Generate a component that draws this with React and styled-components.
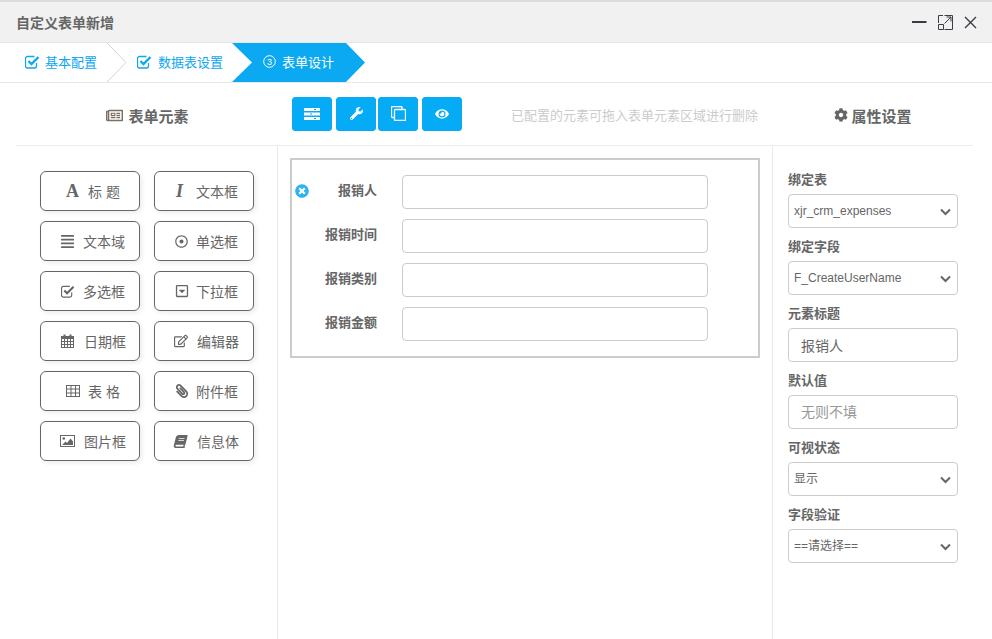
import React from "react";
import styled, { createGlobalStyle } from "styled-components";
import {
  FaAlignJustify, FaRegDotCircle, FaRegCaretSquareDown,
  FaRegEdit, FaPaperclip, FaBook, FaWrench, FaEye,
  FaCog, FaRegNewspaper, FaTimesCircle,
} from "react-icons/fa";

const Global = createGlobalStyle`
  html, body { margin: 0; padding: 0; background: #fff; overflow: hidden; }
  * { box-sizing: border-box; }
  body { font-family: "Liberation Sans", "Noto Sans CJK SC", sans-serif; color: #666; }
`;

const Page = styled.div`
  width: 992px;
  height: 639px;
  display: flex;
  flex-direction: column;
  border-top: 2px solid #dcdcdf;
`;

const TitleBar = styled.header`
  height: 41px;
  flex: none;
  background: #f1f1f1;
  border-bottom: 1px solid #e6e6e6;
  display: flex;
  align-items: center;
  justify-content: space-between;
  padding: 0 15px 0 16px;
`;
const Title = styled.h1`
  margin: 0;
  font-size: 14px;
  font-weight: bold;
  color: #666;
`;
const WinControls = styled.div`
  display: flex;
  align-items: center;
  gap: 11px;
  color: #3c3c46;
  svg { display: block; }
`;

const Steps = styled.nav`
  height: 40px;
  flex: none;
  display: flex;
  border-bottom: 1px solid #e8e8e8;
`;
const Step = styled.div`
  position: relative;
  width: ${(p) => p.$w}px;
  display: flex;
  align-items: center;
  gap: ${(p) => p.$gap}px;
  padding: 0 0 2px ${(p) => p.$pad}px;
  font-size: 13px;
  color: ${(p) => (p.$active ? "#fff" : "#0aa7f2")};
  background: ${(p) => (p.$active ? "#0aa9f2" : "transparent")};
  clip-path: ${(p) =>
    p.$active ? "polygon(0 0, 114px 0, 133px 50%, 114px 100%, 0 100%, 20px 50%)" : "none"};
`;
const Chevron = styled.svg`
  position: absolute;
  top: 0;
  right: 0;
`;
const StepNum = styled.svg`
  flex: none;
`;

const Toolbar = styled.div`
  height: 63px;
  flex: none;
  margin: 0 19px 0 16px;
  border-bottom: 1px solid #ececec;
  display: flex;
  align-items: center;
  padding-bottom: 1px;
`;
const PanelTitle = styled.div`
  width: ${(p) => p.$w}px;
  flex: none;
  display: flex;
  align-items: center;
  justify-content: center;
  gap: ${(p) => p.$gap}px;
  padding: 3px 0 0 ${(p) => p.$left || 0}px;
  font-size: 15px;
  font-weight: bold;
  color: #666;
`;
const Actions = styled.div`
  display: flex;
  gap: 4px;
  margin-left: 15px;
  button:nth-child(3) { margin-left: -2px; }
`;
const ActionBtn = styled.button`
  width: 40px;
  height: 34px;
  padding: 0;
  border: 1px solid #0aa9f2;
  border-radius: 3px;
  background: #05abf5;
  color: #fff;
  display: flex;
  align-items: center;
  justify-content: center;
`;
const Hint = styled.div`
  margin-left: 49px;
  padding-top: 2px;
  width: 277px;
  flex: none;
  font-size: 13px;
  color: #ccc;
  white-space: nowrap;
`;

const Body = styled.main`
  flex: 1;
  min-height: 0;
  display: grid;
  grid-template-columns: 278px 495px 1fr;
`;
const Palette = styled.aside`
  border-right: 1px solid #e9e9e9;
  padding: 25px 0 0 40px;
  display: grid;
  grid-template-columns: 100px 100px;
  grid-auto-rows: 40px;
  column-gap: 14px;
  row-gap: 10px;
  align-content: start;
`;
const ElementBtn = styled.div`
  border: 1px solid #666;
  border-radius: 6px;
  background: #fff;
  box-shadow: 2px 2px 5px rgba(0, 0, 0, 0.08);
  display: flex;
  align-items: center;
  padding-left: ${(p) => p.$left}px;
  gap: ${(p) => p.$gap}px;
  font-size: 14px;
  color: #666;
  white-space: pre;
  svg { flex: none; }
`;
const GlyphIcon = styled.span`
  font-family: "Liberation Serif", serif;
  font-weight: bold;
  font-style: ${(p) => (p.$italic ? "italic" : "normal")};
  font-size: 18px;
  line-height: 1;
  width: ${(p) => p.$w}px;
  flex: none;
  color: #666;
`;
const MirroredClip = styled(FaPaperclip)`
  transform: scaleX(-1);
`;
const SlantedBook = styled(FaBook)`
  transform: skewX(-14deg);
`;

const Canvas = styled.section`
  padding: 12px 12px 0 12px;
`;
const FormBox = styled.div`
  position: relative;
  width: 470px;
  height: 200px;
  border: 2px solid #ccc;
  padding: 15px 0 0 0;
  display: flex;
  flex-direction: column;
  gap: 10px;
`;
const RemoveBadge = styled.span`
  position: absolute;
  left: 3px;
  top: 24px;
  color: #2eb2f2;
  display: flex;
  background: radial-gradient(circle, #fff 45%, transparent 50%);
`;
const FormRow = styled.div`
  display: flex;
  align-items: center;
  height: 34px;
`;
const RowLabel = styled.label`
  width: 85px;
  margin-right: 25px;
  padding-bottom: 5px;
  text-align: right;
  font-size: 13px;
  font-weight: bold;
  color: #666;
`;
const RowInput = styled.input`
  width: 306px;
  height: 34px;
  border: 1px solid #ccc;
  border-radius: 4px;
  background: #fff;
  outline: none;
`;

const Props = styled.aside`
  border-left: 1px solid #e9e9e9;
  margin-left: -1px;
  padding: 25px 0 0 15px;
  display: flex;
  flex-direction: column;
`;
const Field = styled.div`
  width: 170px;
  height: 67px;
  display: flex;
  flex-direction: column;
`;
const FieldLabel = styled.label`
  height: 23px;
  line-height: 17px;
  font-size: 13px;
  font-weight: bold;
  color: #666;
`;
const SelectWrap = styled.div`
  position: relative;
  height: 34px;
`;
const Select = styled.select`
  width: 100%;
  height: 34px;
  appearance: none;
  border: 1px solid #ccc;
  border-radius: 4px;
  background: #fff;
  padding: 0 0 0 5px;
  font: 12px "Liberation Sans", "Noto Sans CJK SC", sans-serif;
  color: #666;
  outline: none;
`;
const Caret = styled.svg`
  position: absolute;
  right: 7px;
  top: 14px;
  pointer-events: none;
`;
const TextInput = styled.input`
  width: 100%;
  height: 34px;
  border: 1px solid #ccc;
  border-radius: 4px;
  background: #fff;
  padding: 0 12px;
  font: 14px "Liberation Sans", "Noto Sans CJK SC", sans-serif;
  color: #666;
  outline: none;
  &::placeholder { color: #999; opacity: 1; }
`;

const CheckSquare = ({ size = 14, color = "currentColor" }) => (
  <svg width={size + 1} height={size} viewBox="0 0 15 14" fill="none" stroke={color}>
    <path d="M11.5 8v3a2 2 0 0 1-2 2H2.5a2 2 0 0 1-2-2V3.500a2 2 0 0 1 2-2H9.500" strokeWidth="1.300" />
    <path d="M3.500 6l3 3L13.500 2" strokeWidth="2.300" />
  </svg>
);

const CalendarIcon = () => (
  <svg width="13" height="14" viewBox="0 0 13 14">
    <rect x="0.500" y="2.500" width="12" height="11" fill="none" stroke="currentColor" />
    <rect x="0.500" y="2.500" width="12" height="2.500" fill="currentColor" />
    <path d="M.5 7.500H12.500M.5 10.500H12.500M3.500 5V13.500M6.500 5V13.500M9.500 5V13.500" stroke="currentColor" strokeWidth="1" />
    <rect x="2.500" y="0.500" width="2" height="3" fill="currentColor" />
    <rect x="8.500" y="0.500" width="2" height="3" fill="currentColor" />
  </svg>
);

const TableIcon = () => (
  <svg width="14" height="12" viewBox="0 0 14 12" fill="none" stroke="currentColor" strokeWidth="1">
    <rect x="0.500" y="0.500" width="13" height="11" />
    <path d="M.5 4H13.500M.5 8H13.500M5 .5V11.500M9.500 .5V11.500" />
  </svg>
);

const PictureIcon = () => (
  <svg width="15" height="12" viewBox="0 0 15 12">
    <rect x="0.500" y="0.500" width="14" height="11" fill="none" stroke="currentColor" />
    <circle cx="3.800" cy="3.500" r="1.300" fill="currentColor" />
    <path d="M2 10L5.500 6.500L7 8L10.500 3.500L13 6.500V10Z" fill="currentColor" />
  </svg>
);

const StacksIcon = () => (
  <svg width="16" height="12" viewBox="0 0 16 12">
    <rect x="0" y="0" width="16" height="3" fill="#fff" />
    <rect x="0" y="4.500" width="16" height="3" fill="#fff" />
    <rect x="0" y="9" width="16" height="3" fill="#fff" />
    <rect x="10" y="1" width="2" height="1" fill="#05abf5" />
    <rect x="6" y="5.500" width="2" height="1" fill="#05abf5" />
    <rect x="10" y="10" width="2" height="1" fill="#05abf5" />
  </svg>
);

const CloneIcon = () => (
  <svg width="15" height="15" viewBox="0 0 15 15" fill="none" stroke="#fff" strokeWidth="1.300">
    <path d="M3 11.500H1.500a1 1 0 0 1-1-1V1.500a1 1 0 0 1 1-1H10a1 1 0 0 1 1 1V3" />
    <rect x="3.500" y="3.500" width="11" height="11" rx="1" />
  </svg>
);

const CircledThree = () => (
  <StepNum width="13" height="13" viewBox="0 0 13 13">
    <circle cx="6.500" cy="6.500" r="5.800" fill="none" stroke="#fff" strokeWidth="1" />
    <text x="6.500" y="9.500" textAnchor="middle" fontSize="9" fill="#fff" fontFamily="Liberation Sans, sans-serif">3</text>
  </StepNum>
);

const elements = [
  [<GlyphIcon $w={13}>A</GlyphIcon>, "标 题", 25, 9],
  [<GlyphIcon $w={13} $italic>I</GlyphIcon>, "文本框", 21, 7],
  [<FaAlignJustify size={15} />, "文本域", 19, 8],
  [<FaRegDotCircle size={13} />, "单选框", 20, 8],
  [<CheckSquare size={13} />, "多选框", 20, 8],
  [<FaRegCaretSquareDown size={14} />, "下拉框", 20, 7],
  [<CalendarIcon />, "日期框", 20, 10],
  [<FaRegEdit size={14} />, "编辑器", 19, 9],
  [<TableIcon />, "表 格", 25, 8],
  [<MirroredClip size={14} />, "附件框", 20, 7],
  [<PictureIcon />, "图片框", 19, 9],
  [<SlantedBook size={13} />, "信息体", 19, 10],
];

const rows = ["报销人", "报销时间", "报销类别", "报销金额"];

const CaretIcon = () => (
  <Caret width="11" height="8" viewBox="0 0 11 8">
    <polyline points="1,1.500 5.500,6 10,1.500" fill="none" stroke="#666" strokeWidth="2" />
  </Caret>
);

const SelectField = ({ label, value }) => (
  <Field>
    <FieldLabel>{label}</FieldLabel>
    <SelectWrap>
      <Select defaultValue={value}>
        <option>{value}</option>
      </Select>
      <CaretIcon />
    </SelectWrap>
  </Field>
);

const StepChevron = () => (
  <Chevron width="21" height="39" viewBox="0 0 21 39">
    <polyline points="1,0 20,19.500 1,39" fill="none" stroke="#d2d2d2" strokeWidth="1" />
  </Chevron>
);

export default function App() {
  return (
    <Page>
      <Global />
      <TitleBar>
        <Title>自定义表单新增</Title>
        <WinControls>
          <svg width="15" height="14" viewBox="0 0 15 14">
            <rect x="0" y="6" width="14.500" height="2" fill="#3c3c46" />
          </svg>
          <svg width="15" height="15" viewBox="0 0 15 15" fill="none" stroke="#3c3c46" strokeWidth="1">
            <path d="M6.500 .5H14.500V14.500H6.500M.5 8V.5H5M.5 9.500H5.500V14.500H.5Z" />
            <path d="M6.500 8.500L13 2M8.500 2H13V6.500" />
          </svg>
          <svg width="13" height="13" viewBox="0 0 13 13" stroke="#3c3c46" strokeWidth="1.400">
            <path d="M1 1L12 12M12 1L1 12" />
          </svg>
        </WinControls>
      </TitleBar>

      <Steps>
        <Step $w={127} $pad={25} $gap={5}>
          <CheckSquare size={14} />
          基本配置
          <StepChevron />
        </Step>
        <Step $w={105} $pad={10} $gap={6}>
          <CheckSquare size={14} />
          数据表设置
        </Step>
        <Step $w={133} $pad={31} $gap={6} $active>
          <CircledThree />
          表单设计
        </Step>
      </Steps>

      <Toolbar>
        <PanelTitle $w={261} $gap={5} $left={2}>
          <FaRegNewspaper size={17} color="#7a6f62" />
          表单元素
        </PanelTitle>
        <Actions>
          <ActionBtn><StacksIcon /></ActionBtn>
          <ActionBtn><FaWrench size={13} /></ActionBtn>
          <ActionBtn><CloneIcon /></ActionBtn>
          <ActionBtn><FaEye size={14} /></ActionBtn>
        </Actions>
        <Hint>已配置的元素可拖入表单元素区域进行删除</Hint>
        <PanelTitle $w={170} $gap={3}>
          <FaCog size={14} />
          属性设置
        </PanelTitle>
      </Toolbar>

      <Body>
        <Palette>
          {elements.map(([icon, label, left, gap]) => (
            <ElementBtn key={label} $left={left} $gap={gap}>
              {icon}
              {label}
            </ElementBtn>
          ))}
        </Palette>

        <Canvas>
          <FormBox>
            <RemoveBadge><FaTimesCircle size={14} /></RemoveBadge>
            {rows.map((r) => (
              <FormRow key={r}>
                <RowLabel>{r}</RowLabel>
                <RowInput />
              </FormRow>
            ))}
          </FormBox>
        </Canvas>

        <Props>
          <SelectField label="绑定表" value="xjr_crm_expenses" />
          <SelectField label="绑定字段" value="F_CreateUserName" />
          <Field>
            <FieldLabel>元素标题</FieldLabel>
            <TextInput defaultValue="报销人" />
          </Field>
          <Field>
            <FieldLabel>默认值</FieldLabel>
            <TextInput placeholder="无则不填" />
          </Field>
          <SelectField label="可视状态" value="显示" />
          <SelectField label="字段验证" value="==请选择==" />
        </Props>
      </Body>
    </Page>
  );
}
